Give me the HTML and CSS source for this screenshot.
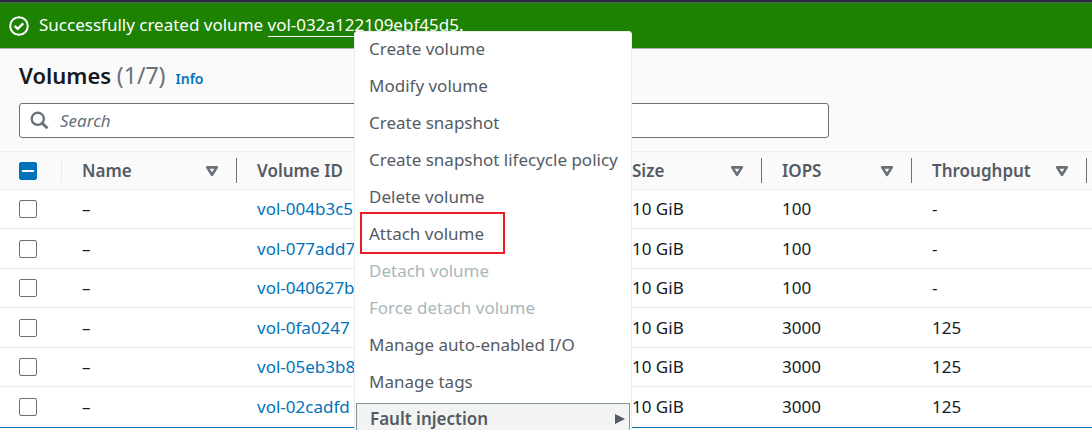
FILE: index.html
```
<!DOCTYPE html>
<html lang="en">
<head>
<meta charset="utf-8">
<title>Volumes</title>
<link rel="stylesheet" href="styles.css">
</head>
<body>
<svg class="defs" aria-hidden="true"><symbol id="sort" viewBox="0 0 14 12"><path d="M2.2 2.4h9.6L7 9.8z" fill="none" stroke="#687078" stroke-width="2.6" stroke-linejoin="round"/></symbol></svg>
<div class="page">
  <div class="topbar"></div>
  <div class="flash" role="status">
    <svg class="flash-icon" viewBox="0 0 20 20" fill="none" stroke="#fff" stroke-width="2"><circle cx="10" cy="10" r="8.8"/><path d="M5.6 9.8l3.1 3 5.6-5.4" stroke-width="2.4"/></svg>
    <p class="flash-text">Successfully created volume <a class="flash-link" href="#">vol-032a122109ebf45d5.</a></p>
  </div>
  <header class="header">
    <div class="heading">
      <h1 class="title">Volumes <span class="count">(1/7)</span></h1>
      <a class="info" href="#">Info</a>
    </div>
    <label class="search">
      <svg class="search-icon" viewBox="0 0 20 20" fill="none" stroke="#687078"><circle cx="8.2" cy="8.2" r="6.4" stroke-width="2.5"/><path d="M12.8 12.8l5.6 5.4" stroke-width="3"/></svg>
      <input class="search-input" type="text" placeholder="Search" aria-label="Search">
    </label>
  </header>
  <table class="table">
    <colgroup><col class="col-check"><col class="col-name"><col class="col-id"><col class="col-number"><col class="col-number"><col class="col-throughput"><col></colgroup>
    <thead>
      <tr>
        <th><div class="th light"><input class="check mixed" type="checkbox" aria-label="Select all volumes"></div></th>
        <th><div class="th">Name<svg class="sort"><use href="#sort"/></svg></div></th>
        <th><div class="th">Volume ID</div></th>
        <th><div class="th">Size<svg class="sort"><use href="#sort"/></svg></div></th>
        <th><div class="th">IOPS<svg class="sort"><use href="#sort"/></svg></div></th>
        <th><div class="th">Throughput<svg class="sort"><use href="#sort"/></svg></div></th>
        <th></th>
      </tr>
    </thead>
    <tbody>
      <tr><td><input class="check" type="checkbox" aria-label="Select volume 1"></td><td>–</td><td><a class="link" href="#">vol-004b3c5</a></td><td>10 GiB</td><td>100</td><td>-</td><td></td></tr>
      <tr><td><input class="check" type="checkbox" aria-label="Select volume 2"></td><td>–</td><td><a class="link" href="#">vol-077add7</a></td><td>10 GiB</td><td>100</td><td>-</td><td></td></tr>
      <tr><td><input class="check" type="checkbox" aria-label="Select volume 3"></td><td>–</td><td><a class="link" href="#">vol-040627b</a></td><td>10 GiB</td><td>100</td><td>-</td><td></td></tr>
      <tr><td><input class="check" type="checkbox" aria-label="Select volume 4"></td><td>–</td><td><a class="link" href="#">vol-0fa0247</a></td><td>10 GiB</td><td>3000</td><td>125</td><td></td></tr>
      <tr><td><input class="check" type="checkbox" aria-label="Select volume 5"></td><td>–</td><td><a class="link" href="#">vol-05eb3b8</a></td><td>10 GiB</td><td>3000</td><td>125</td><td></td></tr>
      <tr><td><input class="check" type="checkbox" aria-label="Select volume 6"></td><td>–</td><td><a class="link" href="#">vol-02cadfd</a></td><td>10 GiB</td><td>3000</td><td>125</td><td></td></tr>
    </tbody>
  </table>
  <div class="menu" role="menu">
    <button class="item" role="menuitem">Create volume</button>
    <button class="item" role="menuitem">Modify volume</button>
    <button class="item" role="menuitem">Create snapshot</button>
    <button class="item" role="menuitem">Create snapshot lifecycle policy</button>
    <button class="item" role="menuitem">Delete volume</button>
    <button class="item marked" role="menuitem">Attach volume</button>
    <button class="item" role="menuitem" disabled>Detach volume</button>
    <button class="item" role="menuitem" disabled>Force detach volume</button>
    <button class="item" role="menuitem">Manage auto-enabled I/O</button>
    <button class="item" role="menuitem">Manage tags</button>
    <button class="item submenu" role="menuitem">Fault injection<svg class="arrow" viewBox="0 0 10 12"><path d="M0 1l10 5-10 5z" fill="#545b64"/></svg></button>
  </div>
</div>
</body>
</html>
```
FILE: styles.css
```
*, *::before, *::after { box-sizing: border-box; }
body { margin: 0; background: #fff; color: #16191f; font: 17px/24px "Noto Sans", "Open Sans", sans-serif; }
.defs { display: none; }
.page { position: relative; height: 100vh; overflow: hidden; }
.topbar { height: 3px; background: #232f3e; border-bottom: 1px solid #545b64; }
.flash { display: flex; align-items: center; gap: 10px; height: 46px; padding: 0 9px; background: #1d8102; border-bottom: 1px solid #aab7b8; color: #fff; }
.flash-icon { width: 20px; height: 20px; flex: none; }
.flash-text { margin: 0; padding-bottom: 2px; white-space: nowrap; }
.flash-link { display: inline-block; color: #fff; text-decoration: none; line-height: 22px; border-bottom: 1px solid #fff; }
.header { padding: 11px 19px 13px; background: #fafafa; }
.heading { display: flex; align-items: baseline; gap: 10px; }
.title { margin: 0; font-size: 22px; line-height: 30px; font-weight: 600; }
.count { color: #687078; font-size: 23px; font-weight: 400; }
.info { color: #0073bb; font-size: 14px; line-height: 20px; font-weight: 600; text-decoration: none; }
.search { display: flex; align-items: center; gap: 11px; max-width: 810px; height: 35px; margin-top: 13px; padding: 0 10px; background: #fff; border: 1px solid #687078; border-radius: 3px; }
.search-icon { width: 19px; height: 19px; flex: none; }
.search-input { flex: 1; min-width: 0; padding: 0; border: 0; outline: 0; background: none; font: inherit; color: inherit; }
.search-input::placeholder { color: #687078; font-style: italic; opacity: 1; }
.table { width: 100%; table-layout: fixed; border-collapse: separate; border-spacing: 0; border-top: 1px solid #eaeded; border-bottom: 1px solid #0073bb; }
.col-check { width: 62px; }
.col-name, .col-throughput { width: 175px; }
.col-id { width: 375px; }
.col-number { width: 150px; }
th, td { padding: 0 0 0 20px; text-align: left; white-space: nowrap; border-bottom: 1px solid #eaeded; }
th:first-child, td:first-child { padding-left: 19px; }
th { height: 38px; background: #fafafa; color: #545b64; font-weight: 600; }
td { height: 39px; }
tr:nth-child(even) td { height: 40px; }
tbody tr:last-child td { border-bottom-color: #fff; }
.th { display: flex; align-items: center; justify-content: space-between; height: 25px; padding-right: 17px; border-right: 1px solid #687078; }
.th.light { border-color: #eaeded; }
.sort { width: 14px; height: 12px; }
.check { appearance: none; display: block; width: 18px; height: 18px; margin: 0; background: #fff; border: 1px solid #687078; border-radius: 2px; }
.mixed { background: linear-gradient(#fff, #fff) center / 12px 2px no-repeat #0073bb; border-color: #0073bb; flex: none; }
.link { color: #0073bb; text-decoration: none; }
.menu { position: absolute; top: 31px; left: 354px; width: 278px; background: #fff; border: 1px solid #eaeded; border-radius: 3px; }
.item { position: relative; display: block; width: 100%; height: 37px; padding: 0 14px 4px; border: 0; background: none; color: #545b64; font: inherit; text-align: left; white-space: nowrap; }
.item:disabled { color: #aab7b8; }
.marked::after { content: ""; position: absolute; top: -5px; left: 5px; width: 145px; height: 42px; border: 2px solid #ec1c24; }
.menu .submenu { display: flex; align-items: center; justify-content: space-between; width: calc(100% - 2px); margin: 1px; padding: 0 4px 5px 13px; border: 1px solid #879596; background: #f2f3f3; font-weight: 600; }
.arrow { width: 10px; height: 12px; }
```
